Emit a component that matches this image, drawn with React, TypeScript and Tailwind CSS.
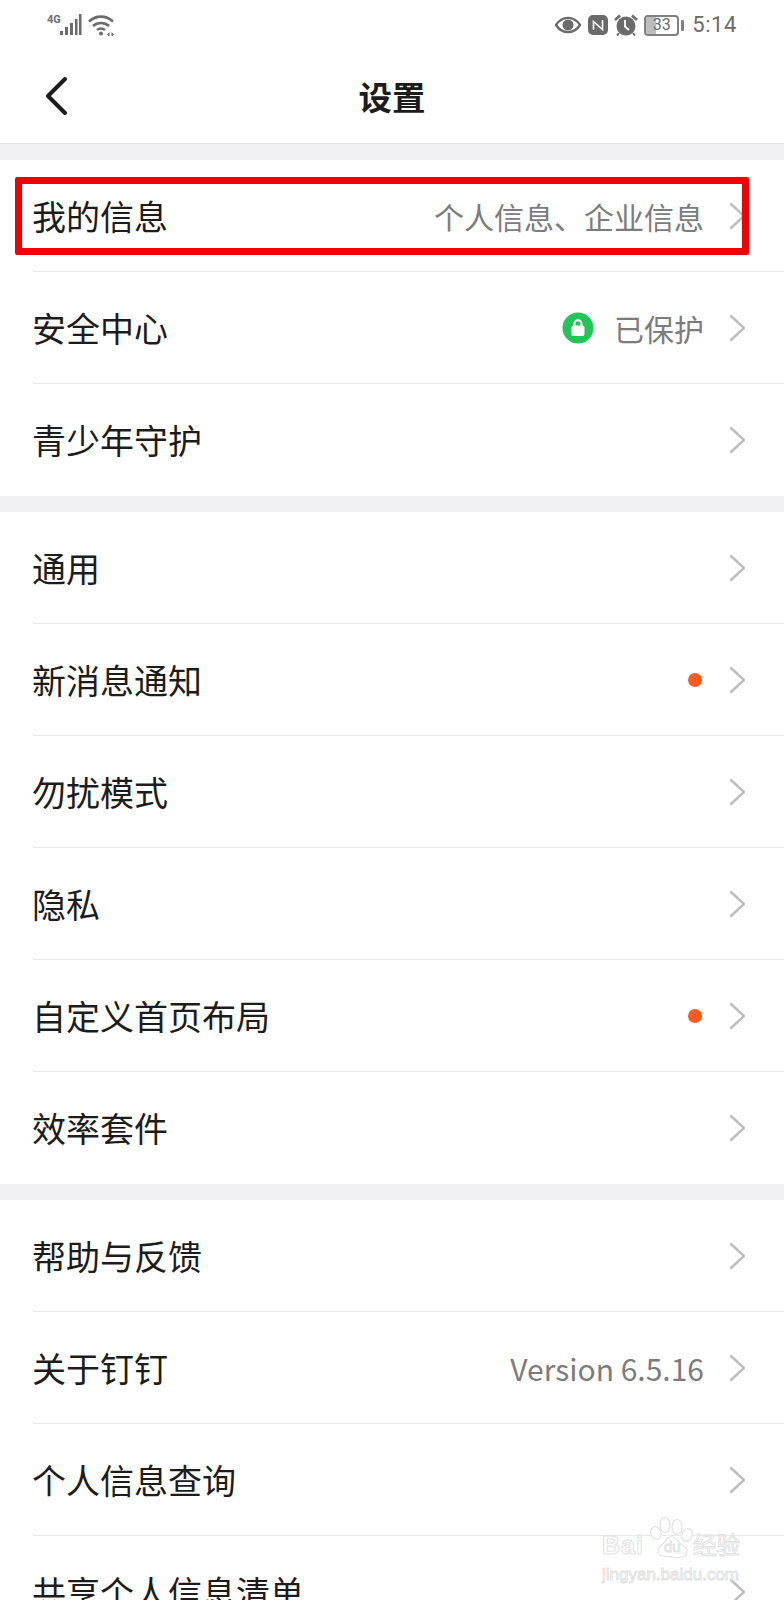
const cjk = "font-['Noto_Sans_CJK_SC','Noto_Sans',sans-serif]";

type Row = { label: string; value?: string; dot?: boolean; lock?: boolean };

const groups: Row[][] = [
  [
    { label: '我的信息', value: '个人信息、企业信息' },
    { label: '安全中心', value: '已保护', lock: true },
    { label: '青少年守护' },
  ],
  [
    { label: '通用' },
    { label: '新消息通知', dot: true },
    { label: '勿扰模式' },
    { label: '隐私' },
    { label: '自定义首页布局', dot: true },
    { label: '效率套件' },
  ],
  [
    { label: '帮助与反馈' },
    { label: '关于钉钉', value: 'Version 6.5.16' },
    { label: '个人信息查询' },
    { label: '共享个人信息清单' },
  ],
];

function LockBadge() {
  return (
    <svg width="32" height="32" viewBox="0 0 32 32" className="mr-[20px]">
      <circle cx="16" cy="16" r="15.5" fill="#22c55a" />
      <path d="M12.5 14v-2.2a3.5 3.5 0 0 1 7 0V14" fill="none" stroke="#fff" strokeWidth="2" />
      <rect x="9.5" y="13.5" width="13" height="10.5" rx="2" fill="#fff" />
    </svg>
  );
}

function Chevron() {
  return (
    <svg width="17" height="28" viewBox="0 0 17 28" className="ml-[25px]">
      <path d="M2 2l13 12L2 26" fill="none" stroke="#bebebe" strokeWidth="2.4" strokeLinecap="round" strokeLinejoin="round" />
    </svg>
  );
}

function SettingRow({ row, last }: { row: Row; last: boolean }) {
  return (
    <div className="ml-[33px] h-[112px]">
      <div className={`flex h-full items-center pr-[38px] ${last ? '' : 'border-b border-[#e8e8e8]'}`}>
        <span className="-ml-[1px] text-[34px] leading-none text-[#1c1c1c]">{row.label}</span>
        <div className="ml-auto flex items-center">
          {row.lock && <LockBadge />}
          {row.value && <span className="text-[30px] leading-none text-[#7c7c7c]">{row.value}</span>}
          {row.dot && <span className="mr-[2px] h-[14px] w-[14px] rounded-full bg-[#ff5a1f]" />}
        </div>
        <Chevron />
      </div>
    </div>
  );
}

function StatusBar() {
  return (
    <div className="flex h-[50px] items-center justify-between pl-[47px] pr-[47px] text-[#6b6b6b]">
      <div className="flex items-center">
        <span className="mb-[11px] font-['Roboto'] text-[11px] font-bold leading-none">4G</span>
        <svg width="22" height="22" viewBox="0 0 22 22" className="ml-[-1px]" fill="currentColor">
          <rect x="0" y="17" width="3" height="4" />
          <rect x="5" y="13" width="3" height="8" />
          <rect x="10" y="9" width="3" height="12" />
          <rect x="15" y="5" width="2.500" height="16" />
          <rect x="19" y="0" width="2.500" height="21" />
        </svg>
        <svg width="27" height="22" viewBox="0 0 27 22" className="ml-[6px]" fill="none" stroke="currentColor" strokeWidth="2.600">
          <path d="M1 7.500c7-6.500 17-6.500 24 0" />
          <path d="M5 12c4.800-4 11.200-4 16 0" />
          <path d="M9 16c2.600-2 5.400-2 8 0" />
          <circle cx="13" cy="19.500" r="2" fill="currentColor" stroke="none" />
          <path d="M19 20.500l2.500-2.500v5zM26 20.500l-2.500-2.500v5z" fill="currentColor" stroke="none" />
        </svg>
      </div>
      <div className="flex items-center">
        <svg width="26" height="18" viewBox="0 0 26 18">
          <path d="M1 9c6-9.500 18-9.500 24 0-6 9.500-18 9.500-24 0z" fill="none" stroke="currentColor" strokeWidth="2.400" />
          <circle cx="13" cy="9" r="5.500" fill="currentColor" />
        </svg>
        <svg width="20" height="22" viewBox="0 0 20 22" className="ml-[7px]">
          <rect x="0" y="1" width="20" height="20" rx="5" fill="currentColor" />
          <path d="M5.500 16V7.500l9 8V6" fill="none" stroke="#fff" strokeWidth="1.600" />
        </svg>
        <svg width="24" height="22" viewBox="0 0 24 22" className="ml-[6px]">
          <circle cx="12" cy="12" r="9.500" fill="currentColor" />
          <path d="M11 6v6.500l4 3.500" fill="none" stroke="#fff" strokeWidth="1.800" />
          <path d="M1 6l5-4.500M23 6l-5-4.500" stroke="currentColor" strokeWidth="2.600" fill="none" />
          <path d="M5 19l-2 2.500M19 19l2 2.500" stroke="currentColor" strokeWidth="2" fill="none" />
        </svg>
        <div className="ml-[6px] flex items-center">
          <div className="relative flex h-[21px] w-[35px] items-center justify-center overflow-hidden rounded-[4px] border-2 border-[#808080]">
            <div className="absolute inset-y-0 left-0 w-[33%] bg-[#bcbcbc]" />
            <span className="relative font-['Roboto'] text-[16px] leading-none">33</span>
          </div>
          <div className="ml-[2px] h-[11px] w-[3px] rounded-[1px] bg-[#808080]" />
        </div>
        <span className="ml-[8px] font-['Roboto'] text-[22px] leading-none tracking-[0.6px]">5:14</span>
      </div>
    </div>
  );
}

function Watermark() {
  const outline = '[-webkit-text-stroke:1px_#e2e2e2] text-transparent leading-none whitespace-nowrap absolute';
  return (
    <div className="pointer-events-none absolute left-[601px] top-[1514px] h-[70px] w-[144px]">
      <svg width="44" height="46" viewBox="0 0 44 46" className="absolute left-[49px] top-0" fill="#fff" stroke="#e2e2e2" strokeWidth="1.2">
        <ellipse cx="6" cy="19" rx="5" ry="6.500" transform="rotate(-20 6 19)" />
        <ellipse cx="15" cy="11" rx="5" ry="7.500" />
        <ellipse cx="27" cy="13" rx="5" ry="7.500" />
        <ellipse cx="37" cy="21" rx="5" ry="6.500" transform="rotate(20 37 21)" />
        <path d="M8 37c0-6 6-6 8-11 2-4 9-4 11 0 2 5 10 5 10 11 0 7-8 7-14 6-5-1-15 1-15-6z" />
      </svg>
      <span className={`${outline} left-[1px] top-[19px] font-['Liberation_Sans'] text-[25px] font-bold tracking-[1px]`}>Bai</span>
      <span className={`${outline} left-[63px] top-[25px] font-['Liberation_Sans'] text-[15px]`}>du</span>
      <span className={`${outline} left-[92px] top-[19px] text-[23.5px] ${cjk}`}>经验</span>
      <span className={`${outline} left-[1px] top-[52px] font-['Liberation_Sans'] text-[17px]`}>jingyan.baidu.com</span>
    </div>
  );
}

export default function App() {
  return (
    <div className={`relative h-[1600px] w-[784px] overflow-hidden bg-white ${cjk}`}>
      <header className="flex h-[144px] flex-col border-b border-[#e2e2e2]">
        <StatusBar />
        <div className="relative flex flex-1 items-center justify-center pb-[2px]">
          <svg width="24" height="40" viewBox="0 0 24 40" className="absolute left-[44px] top-[26px]">
            <path d="M21 3L4 20l17 17" fill="none" stroke="#1c1c1c" strokeWidth="4" strokeLinecap="round" strokeLinejoin="round" />
          </svg>
          <h1 className="text-[33.5px] font-bold leading-none text-[#1c1c1c]">设置</h1>
        </div>
      </header>
      {groups.map((group, i) => (
        <section key={i}>
          <div className="h-[16px] bg-[#f0f0f5]" />
          {group.map((row, j) => (
            <SettingRow key={row.label} row={row} last={j === group.length - 1} />
          ))}
        </section>
      ))}
      {/* annotation box drawn over the first row */}
      <div className="absolute left-[15px] top-[177px] h-[78px] w-[734px] rounded-[2px] border-[7px] border-[#f20000]" />
      <Watermark />
    </div>
  );
}
